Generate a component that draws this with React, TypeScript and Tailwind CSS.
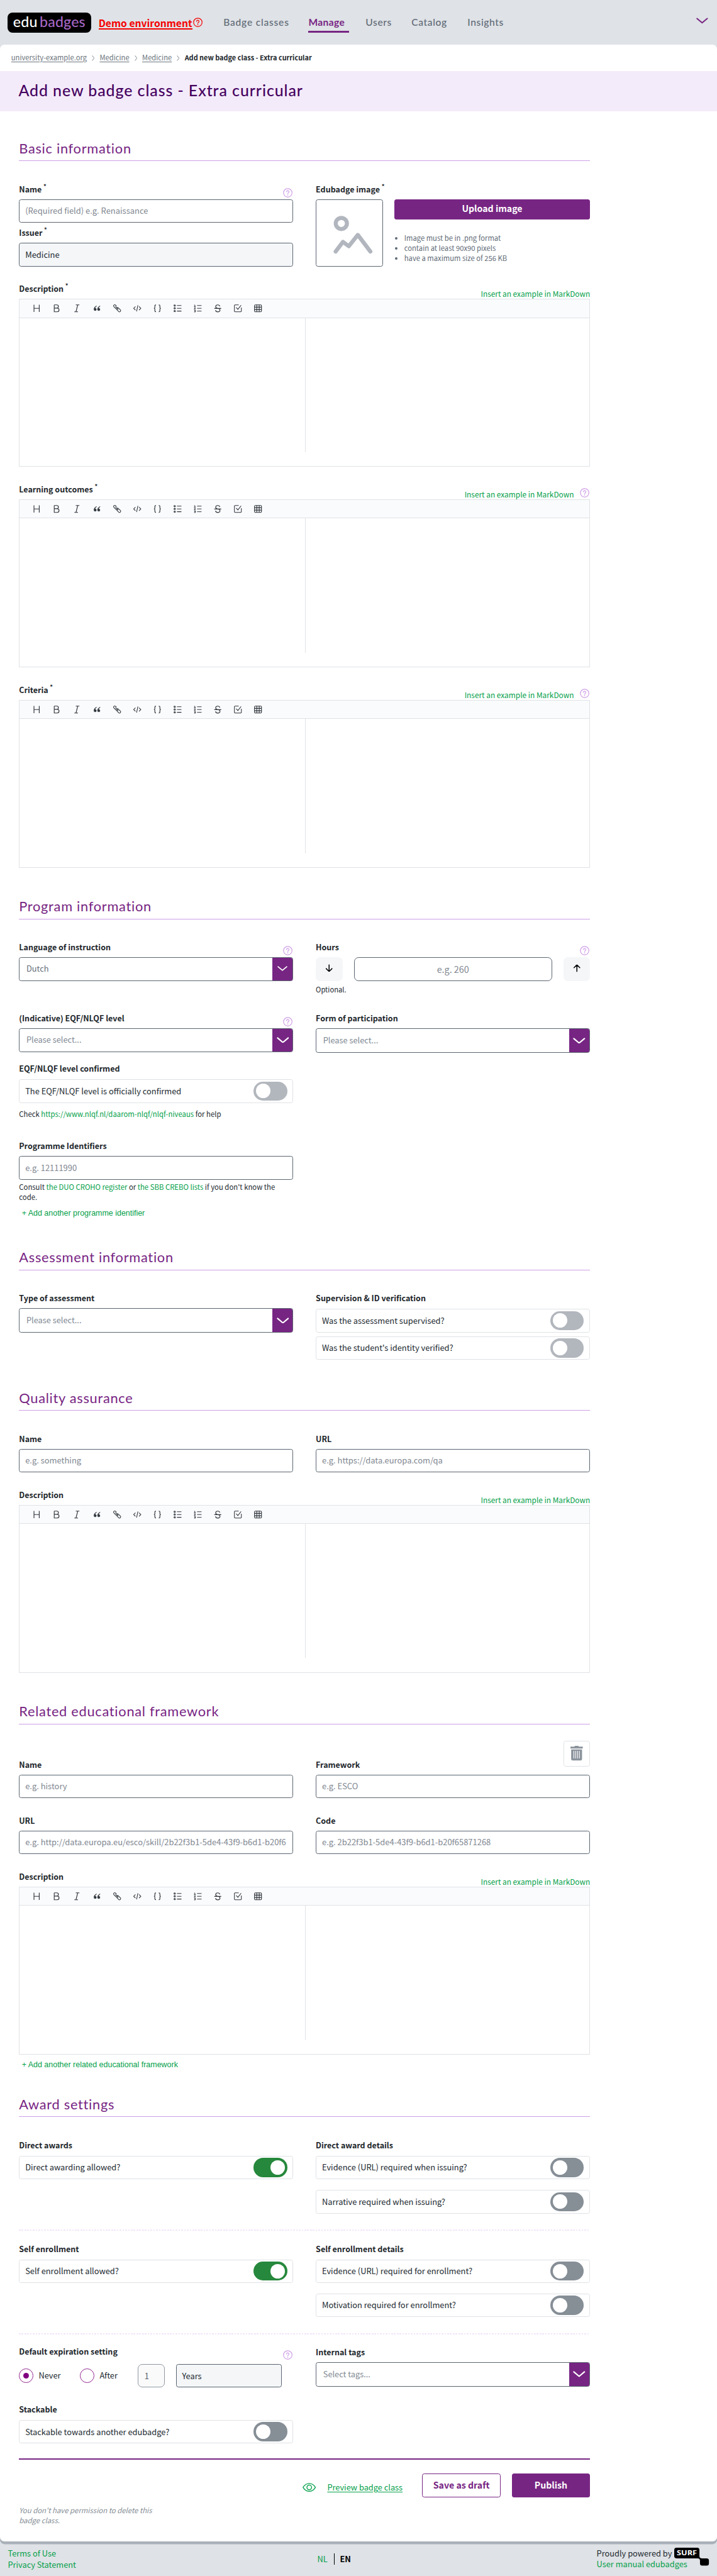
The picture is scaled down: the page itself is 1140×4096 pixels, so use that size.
import React from "react";

/* ---------- icons ---------- */

function Help({ className = "text-[#cf9fe6]" }: { className?: string }) {
  return (
    <svg viewBox="0 0 24 24" className={`size-[17px] shrink-0 ${className}`} fill="none" stroke="currentColor" strokeLinecap="round">
      <circle cx="12" cy="12" r="10.7" strokeWidth="1.9" />
      <path d="M9 9.6a3 3 0 1 1 4.4 2.6c-.9.5-1.4 1-1.4 2.1" strokeWidth="2" />
      <path d="M12 17.6v.2" strokeWidth="2.4" />
    </svg>
  );
}

function Chevron({ className }: { className: string }) {
  return (
    <svg viewBox="0 0 22 11" className={className} fill="none" stroke="currentColor" strokeWidth="2.4" strokeLinecap="round" strokeLinejoin="round">
      <path d="M1.5 1.5 11 9.5l9.5-8" />
    </svg>
  );
}

function Crumb() {
  return (
    <svg viewBox="0 0 5 10" className="mx-[9px] mt-[2px] h-[10px] w-[5px]" fill="none" stroke="#6c757d" strokeWidth="1">
      <path d="M.7.5 4.2 5 .7 9.5" />
    </svg>
  );
}

function Arrow({ up = false }: { up?: boolean }) {
  return (
    <svg viewBox="0 0 14 14" className={up ? "h-[14px] w-[14px] -translate-y-[2px] rotate-180" : "h-[14px] w-[14px] -translate-y-[2px]"} fill="none" stroke="#000" strokeWidth="1.7" strokeLinecap="round" strokeLinejoin="round">
      <path d="M7 1v12M1.8 7.8 7 13l5.2-5.2" />
    </svg>
  );
}

const toolIcons: React.ReactNode[] = [
  <path d="M2.3.5v13M11.7.5v13M2.3 7h9.4" />,
  <path d="M2.5.8v12.4h5.3a3.3 3.3 0 0 0 0-6.6H2.5M2.5.8h4.6a2.9 2.9 0 0 1 0 5.8" />,
  <path d="M5 .8h6.5M2.5 13.2H9M8.6.8 5.4 13.2" />,
  <path d="M6 2.6C3.4 3.6 1.4 6 1.4 9a2.3 2.3 0 1 0 2.1-2.3C3.8 5.2 4.8 4 6.3 3.3ZM12.4 2.6C9.8 3.6 7.8 6 7.8 9a2.3 2.3 0 1 0 2.1-2.3c.3-1.5 1.3-2.7 2.8-3.4Z" fill="currentColor" strokeWidth=".4" />,
  <path d="M8.4 8.4 5 5a2 2 0 0 1 .3-2.7L4.2 1.2a2 2 0 0 0-2.8 0l-.2.2a2 2 0 0 0 0 2.8l3.6 3.6a2 2 0 0 0 2.8 0M5.6 5.6 9 9M6.4 6.2a2 2 0 0 1 2.8 0l3.6 3.6a2 2 0 0 1 0 2.8l-.2.2a2 2 0 0 1-2.8 0L6.2 9.2" strokeWidth="1.2" />,
  <path d="M3.8 3.8.6 7l3.200 3.200M10.200 3.800 13.400 7l-3.200 3.200M8.200 1.600 5.800 12.400" strokeWidth="1.2" />,
  <path d="M4.500 1H4a1.500 1.500 0 0 0-1.500 1.500v2.700C2.500 6.200 2 7 .9 7 2 7 2.500 7.800 2.500 8.800v2.700A1.500 1.500 0 0 0 4 13h.5M9.500 1h.5a1.500 1.500 0 0 1 1.500 1.500v2.700c0 1 .5 1.800 1.600 1.800-1.100 0-1.600.8-1.600 1.800v2.700A1.500 1.500 0 0 1 10 13h-.5" />,
  <g>
    <path d="M6 2h8M6 7h8M6 12h8" />
    <circle cx="2" cy="2" r="1.2" />
    <circle cx="2" cy="7" r="1.2" />
    <circle cx="2" cy="12" r="1.2" />
  </g>,
  <path d="M6 2h8M6 7h8M6 12h8M.8 1.2h1.400v2.600M.5 3.800h3M.8 5.800h2v1.200L.8 8.200h2.600M.8 10.300h2.200v3.200H.8M1.200 11.900h1.800" strokeWidth="1.1" />,
  <path d="M.8 7.200h12.400M10.800 3.600C10.400 1.800 9 .8 7 .8 4.800.8 3.300 2 3.300 3.800c0 1.700 1.300 2.700 3.700 3.200 2.700.5 4 1.500 4 3.200 0 1.900-1.600 3.100-4 3.100-2.300 0-3.700-1.200-3.900-3.100" />,
  <path d="M8.500.8H2A1.200 1.200 0 0 0 .8 2v10A1.200 1.200 0 0 0 2 13.200h10a1.200 1.200 0 0 0 1.200-1.200V5.500M4 5.500l3 3.400L12.800 1.400" strokeWidth="1.2" />,
  <g>
    <rect x=".8" y=".8" width="12.4" height="12.4" rx="1.6" />
    <path d="M.8 4.900h12.400M.8 9.100h12.400M4.900.8v12.400M9.100.8v12.400" />
  </g>,
];

/* ---------- form pieces ---------- */

function Label({ text, required = false, help = false, tight = false, link = false }: { text: string; required?: boolean; help?: boolean; tight?: boolean; link?: boolean }) {
  return (
    <div className={tight ? "flex h-[30px] justify-between" : "flex h-[29px] justify-between"}>
      <div className="h-[20px] pt-[1px] text-[14.05px] leading-[20px] font-bold whitespace-nowrap text-[#20262b]">
        {text}
        {required && <span className="ml-[3px] inline-block -translate-y-[7px] text-[10.5px] leading-none">*</span>}
      </div>
      <div className="flex items-end gap-[11px]">
        {link && <a className="-mb-px h-[20px] text-[13.35px] leading-[20px] whitespace-nowrap text-[#04a04a]">Insert an example in MarkDown</a>}
        {help && <span className="mr-[1px] mb-[3px] flex">
          <Help />
        </span>}
      </div>
    </div>
  );
}

function Input({ value, filled = false }: { value: string; filled?: boolean }) {
  return (
    <div className={filled
      ? "flex h-[42px] items-center overflow-hidden rounded-[4px] border border-[#5a6570] bg-[#f4f6f8] px-[10px] pb-[1px] text-[14.55px] whitespace-nowrap text-[#212930]"
      : "flex h-[42px] items-center overflow-hidden rounded-[4px] border border-[#5a6570] bg-white px-[10px] pb-[1px] text-[14.55px] whitespace-nowrap text-[#7f8791]"}>
      {value}
    </div>
  );
}

function Field({ label, value, filled, required, help }: { label: string; value: string; filled?: boolean; required?: boolean; help?: boolean }) {
  return (
    <div>
      <Label text={label} required={required} help={help} />
      <Input value={value} filled={filled} />
    </div>
  );
}

function Select({ value, short = false, small = false }: { value: string; short?: boolean; small?: boolean }) {
  return (
    <div className={short
      ? "flex h-[42px] overflow-hidden rounded-[4px] border border-[#5a6570]"
      : "flex h-[44px] overflow-hidden rounded-[4px] border border-[#5a6570]"}>
      <div className={small
        ? "flex flex-1 items-center pb-[2px] pl-[12px] text-[14.4px] text-[#66707a]"
        : "flex flex-1 items-center pb-[2px] pl-[12px] text-[14.4px] text-[#808993]"}>{value}</div>
      <div className="flex w-[36px] items-center justify-center bg-[#772583] text-white">
        <Chevron className={small ? "mb-[3px] h-[9px] w-[18px]" : "mb-[1px] h-[11px] w-[22px]"} />
      </div>
    </div>
  );
}

function Toggle({ text, state = "off" }: { text: string; state?: "off" | "on" | "disabled" }) {
  const track = { off: "bg-[#868e96]", on: "justify-end bg-[#26883c]", disabled: "bg-[#b2b6bd]" }[state];
  return (
    <div className="flex h-[42px] items-center justify-between rounded-[4px] border border-[#dfe2e6] pr-[10px] pl-[10px]">
      <span className="pb-[1px] text-[14.45px] text-[#212930]">{text}</span>
      <span className={`flex h-[34px] w-[60px] items-center rounded-full px-[4px] ${track}`}>
        <span className="size-[26px] rounded-full bg-white" />
      </span>
    </div>
  );
}

function Editor({ label, required, help }: { label: string; required?: boolean; help?: boolean }) {
  return (
    <div>
      <Label text={label} required={required} help={help} link />
      <div className="flex h-[300px] flex-col border border-[#dfe2e6]">
        <div className="flex h-[33px] shrink-0 items-center gap-[22px] border-b border-[#dfe2e6] bg-[#fafbfd] pl-[23px] text-[#30363c]">
          {toolIcons.map((icon, i) => (
            <svg key={i} viewBox="0 0 14 14" className="size-[14px] overflow-visible" fill="none" stroke="currentColor" strokeWidth="1.3">
              {icon}
            </svg>
          ))}
        </div>
        <div className="mb-[25px] w-[511px] flex-1 border-r border-[#dfe2e6]" />
      </div>
    </div>
  );
}

function Heading({ children }: { children: React.ReactNode }) {
  return (
    <h2 className="h-[40px] border-b border-[#cda0e6] font-[Lato] text-[24.5px] leading-[33px] tracking-[0.8px] whitespace-nowrap text-[#772583]">{children}</h2>
  );
}

function Columns({ children, className = "" }: { children: React.ReactNode; className?: string }) {
  return <div className={`grid grid-cols-2 gap-x-[40px] ${className}`}>{children}</div>;
}

function Dotted() {
  return <div className="h-[2px] bg-[repeating-linear-gradient(90deg,#f2e5f9_0_3px,transparent_3px_5px)]" />;
}

/* ---------- sections ---------- */

function Header() {
  return (
    <header className="flex h-[80px] items-start pl-[13px]">
      <div className="mt-[22px] flex h-[36px] w-[150px] items-center justify-center gap-[4px] rounded-[9px] bg-black pb-[3px] font-[Lato] text-[26px] leading-[30px] font-medium tracking-[0.2px]">
        <span className="text-white">edu</span>
        <span className="text-[#a566c4]">badges</span>
      </div>
      <div className="mt-[31px] ml-[13px] flex w-[184px] items-start gap-[2px]">
        <span className="h-[22px] border-b-[2.4px] border-[#f50000] text-[17.6px] leading-[21px] font-bold whitespace-nowrap text-[#f50000]">Demo environment</span>
        <Help className="text-[#f50000]" />
      </div>
      <nav className="mt-[29px] ml-[39px] flex font-[Lato] text-[17.5px] leading-[22px] font-medium whitespace-nowrap text-[#5f6b77]">
        <span className="w-[152px] tracking-[0.9px]">Badge classes</span>
        <span className="mr-[30px] h-[29px] w-[72px] border-b-[3.4px] border-[#772583] font-bold tracking-[0.4px] text-[#772583]">Manage</span>
        <span className="w-[82px] tracking-[0.7px]">Users</span>
        <span className="w-[100px] tracking-[0.7px]">Catalog</span>
        <span className="tracking-[0.7px]">Insights</span>
      </nav>
      <Chevron className="mt-[32px] mr-[16px] ml-auto h-[11px] w-[21px] text-[#772583]" />
    </header>
  );
}

function Basic() {
  return (
    <section>
      <Heading>Basic information</Heading>
      <Columns className="mt-[39px]">
        <div className="flex flex-col gap-[7px]">
          <Field label="Name" value="(Required field) e.g. Renaissance" required help />
          <Field label="Issuer" value="Medicine" filled required />
        </div>
        <div>
          <Label text="Edubadge image" required />
          <div className="flex h-[120px] gap-[20px]">
            <div className="w-[120px] rounded-[4px] border border-[#5a6570]">
              <svg viewBox="565 357 118 118" className="size-full" fill="none" stroke="#b2b6be" strokeWidth="7.2" strokeLinecap="round" strokeLinejoin="round">
                <circle cx="609.7" cy="399" r="10" />
                <path d="m599.5 449.3 13-17.3 10.5 7.800L639.200 419.500l22.500 29.800" />
              </svg>
            </div>
            <div className="flex-1">
              <div className="flex h-[36px] items-center justify-center rounded-[4px] bg-[#772583] pb-[2px] text-[15.9px] font-bold text-white">Upload image</div>
              <ul className="mt-[24px] list-disc pl-[18px] text-[12.65px] leading-[18px] text-[#5f6b77]">
                <li>Image must be in .png format</li>
                <li>contain at least 90x90 pixels</li>
                <li>have a maximum size of 256 KB</li>
              </ul>
            </div>
          </div>
        </div>
      </Columns>
      <div className="mt-[29px] flex flex-col gap-[29px]">
        <Editor label="Description" required />
        <Editor label="Learning outcomes" required help />
        <Editor label="Criteria" required help />
      </div>
    </section>
  );
}

function Program() {
  return (
    <section className="mt-[52px]">
      <Heading>Program information</Heading>
      <Columns className="mt-[39px] h-[127px]">
        <div>
          <Label text="Language of instruction" help />
          <Select value="Dutch" short small />
        </div>
        <div>
          <Label text="Hours" help />
          <div className="flex h-[42px] gap-[20px]">
            <div className="flex w-[48px] items-center justify-center rounded-[8px] bg-[#f4f6f8]">
              <Arrow />
            </div>
            <div className="flex flex-1 items-center justify-center rounded-[8px] border border-[#5a6570] pb-[1px] text-[16.1px] text-[#7f8791]">e.g. 260</div>
            <div className="flex w-[48px] items-center justify-center rounded-[8px] bg-[#f4f6f8]">
              <Arrow up />
            </div>
          </div>
          <p className="mt-[6px] text-[12.6px] leading-[18px] text-[#212930]">Optional.</p>
        </div>
      </Columns>
      <Columns>
        <div>
          <Label text="(Indicative) EQF/NLQF level" help />
          <Select value="Please select..." short />
          <div className="mt-[19px]">
            <Label text="EQF/NLQF level confirmed" tight />
            <Toggle text="The EQF/NLQF level is officially confirmed" state="disabled" />
          </div>
          <p className="mt-[11px] text-[12.75px] leading-[18px] whitespace-nowrap text-[#212930]">
            Check <a className="text-[#04a04a]">https://www.nlqf.nl/daarom-nlqf/nlqf-niveaus</a> for help
          </p>
          <div className="mt-[37px]">
            <Field label="Programme Identifiers" value="e.g. 12111990" />
          </div>
          <p className="mt-[4px] text-[12.75px] leading-[18px] whitespace-nowrap text-[#212930]">
            Consult <a className="text-[#04a04a]">the DUO CROHO register</a> or <a className="text-[#04a04a]">the SBB CREBO lists</a> if you don&apos;t know the
            <br />
            code.
          </p>
          <p className="mt-[10px] h-[20px] pt-[1px] pl-[5px] font-['Liberation_Sans'] text-[14px] leading-[20px] text-[#04a04a]">+ Add another programme identifier</p>
        </div>
        <div>
          <Label text="Form of participation" />
          <Select value="Please select..." />
        </div>
      </Columns>
    </section>
  );
}

function Assessment() {
  return (
    <section className="mt-[52px]">
      <Heading>Assessment information</Heading>
      <Columns className="mt-[39px]">
        <div>
          <Label text="Type of assessment" />
          <Select value="Please select..." />
        </div>
        <div>
          <Label text="Supervision &amp; ID verification" tight />
          <div className="flex flex-col gap-[7px]">
            <Toggle text="Was the assessment supervised?" state="disabled" />
            <Toggle text="Was the student's identity verified?" state="disabled" />
          </div>
        </div>
      </Columns>
    </section>
  );
}

function Quality() {
  return (
    <section className="mt-[51px]">
      <Heading>Quality assurance</Heading>
      <Columns className="mt-[39px] mb-[29px]">
        <Field label="Name" value="e.g. something" />
        <Field label="URL" value="e.g. https://data.europa.com/qa" />
      </Columns>
      <Editor label="Description" />
    </section>
  );
}

function Framework() {
  return (
    <section className="mt-[52px]">
      <Heading>Related educational framework</Heading>
      <div className="mt-[30px] -mb-[15px] flex h-[46px] justify-end">
        <div className="flex w-[48px] items-start justify-center rounded-[4px] border border-[#dfe2e6] pt-[8px]">
          <svg viewBox="0 0 22 26" className="h-[26px] w-[22px]" fill="#8b939c">
            <path d="M7 1.500 8 0h6l1 1.500h7v3.200H0V1.500ZM1.300 6.500h19.400v17a2.500 2.500 0 0 1-2.500 2.500H3.800a2.500 2.500 0 0 1-2.500-2.500Z" />
            <path d="M6 9v13.500M9.300 9v13.500M12.700 9v13.500M16 9v13.500" stroke="#fff" strokeWidth="1.2" />
          </svg>
        </div>
      </div>
      <Columns className="mb-[29px] gap-y-[29px]">
        <Field label="Name" value="e.g. history" />
        <Field label="Framework" value="e.g. ESCO" />
        <Field label="URL" value="e.g. http://data.europa.eu/esco/skill/2b22f3b1-5de4-43f9-b6d1-b20f6" />
        <Field label="Code" value="e.g. 2b22f3b1-5de4-43f9-b6d1-b20f65871268" />
      </Columns>
      <Editor label="Description" />
      <p className="mt-[8px] h-[20px] pt-[1px] pl-[5px] font-['Liberation_Sans'] text-[14px] leading-[20px] text-[#04a04a]">+ Add another related educational framework</p>
    </section>
  );
}

function Radio({ text, checked = false }: { text: string; checked?: boolean }) {
  return (
    <div className="flex items-center gap-[10px]">
      <span className="flex size-[25px] items-center justify-center rounded-full border border-[#92278f]">
        {checked && <span className="size-[11px] rounded-full bg-[#800080]" />}
      </span>
      <span className="pb-[2px]">{text}</span>
    </div>
  );
}

function Award() {
  return (
    <section className="mt-[44px]">
      <Heading>Award settings</Heading>
      <Columns className="mt-[39px] mb-[29px]">
        <div>
          <Label text="Direct awards" tight />
          <Toggle text="Direct awarding allowed?" state="on" />
        </div>
        <div>
          <Label text="Direct award details" tight />
          <div className="flex flex-col gap-[19px]">
            <Toggle text="Evidence (URL) required when issuing?" />
            <Toggle text="Narrative required when issuing?" />
          </div>
        </div>
      </Columns>
      <Dotted />
      <Columns className="mt-[21px] mb-[29px]">
        <div>
          <Label text="Self enrollment" tight />
          <Toggle text="Self enrollment allowed?" state="on" />
        </div>
        <div>
          <Label text="Self enrollment details" tight />
          <div className="flex flex-col gap-[19px]">
            <Toggle text="Evidence (URL) required for enrollment?" />
            <Toggle text="Motivation required for enrollment?" />
          </div>
        </div>
      </Columns>
      <Dotted />
      <Columns className="mt-[19px]">
        <div>
          <Label text="Default expiration setting" help />
          <div className="mt-[5px] flex h-[42px] items-center text-[14.4px] text-[#212930]">
            <div className="w-[109px]">
              <Radio text="Never" checked />
            </div>
            <div className="w-[103px]">
              <Radio text="After" />
            </div>
            <div className="mr-[20px] flex h-[42px] w-[48px] items-center rounded-[8px] border border-[#8f98a1] bg-[#fafafa] pl-[11px] text-[#59626c]">1</div>
            <div className="flex h-[42px] w-[189px] items-center rounded-[4px] border border-[#5a6570] bg-[#f4f6f8] pb-[1px] pl-[10px]">Years</div>
          </div>
        </div>
        <div className="pt-[2px]">
          <Label text="Internal tags" />
          <Select value="Select tags..." />
        </div>
        <div className="mt-[28px]">
          <Label text="Stackable" tight />
          <Toggle text="Stackable towards another edubadge?" />
        </div>
      </Columns>
    </section>
  );
}

function Actions() {
  return (
    <section className="mt-[27px]">
      <div className="mb-[24.7px] h-[2.3px] bg-[#772583]" />
      <div className="flex h-[42px] justify-end">
        <svg viewBox="0 0 24 16" className="mt-[16px] mr-[20px] h-[16px] w-[24px]" fill="none" stroke="#04a04a" strokeWidth="1.5">
          <path d="M1 8c2.600-4.600 6.400-7 11-7s8.400 2.400 11 7c-2.600 4.600-6.400 7-11 7S3.600 12.600 1 8Z" />
          <circle cx="12" cy="8" r="4.2" />
        </svg>
        <a className="mt-[14px] mr-[35px] text-[14.4px] leading-[20px] text-[#04a04a] underline underline-offset-2">Preview badge class</a>
        <div className="mr-[20px] flex w-[140px] items-center justify-center rounded-[4px] border border-[#772583] pb-[2px] text-[15.9px] font-bold text-[#772583]">Save as draft</div>
        <div className="flex w-[140px] items-center justify-center rounded-[4px] bg-[#772583] pb-[2px] text-[15.9px] font-bold text-white">Publish</div>
      </div>
      <p className="mt-[14px] text-[12.8px] leading-[18px] text-[#868e96] italic">
        You don&apos;t have permission to delete this
        <br />
        badge class.
      </p>
    </section>
  );
}

function Footer() {
  return (
    <footer className="mt-[5px] grid h-[57px] grid-cols-3 px-[14px] text-[14.4px] leading-[20px] text-[#04a04a]">
      <div className="pt-[7px]">
        <p>Terms of Use</p>
        <p>Privacy Statement</p>
      </div>
      <div className="flex justify-center pt-[17px] pr-[87px]">
        <span className="h-[20px] border-r border-black pr-[11px]">NL</span>
        <span className="pl-[10px] font-bold text-black">EN</span>
      </div>
      <div className="flex justify-end pt-[6px]">
        <div className="relative w-[201px] whitespace-nowrap">
          <p className="text-[#212930]">Proudly powered by</p>
          <p>User manual edubadges</p>
          <svg viewBox="0 0 62 32" className="absolute top-[1px] left-[139px] h-[32px] w-[62px]">
            <path d="M4 0h37q4 0 4 4v15H4q-4 0-4-4V4q0-4 4-4Z" fill="#000" />
            <path d="M42 15l3 0q0 4 4 4h9q4 0 4 4v5q0 4-4 4h-8q-4 0-4-4v-5q0-4-4-4Z" fill="#000" />
            <text x="4.500" y="14" fill="#fff" fontFamily="Open Sans" fontWeight="700" fontSize="12" textLength="36" lengthAdjust="spacingAndGlyphs">SURF</text>
          </svg>
        </div>
      </div>
    </footer>
  );
}

export default function App() {
  return (
    <div className="h-[4096px] w-[1140px] overflow-hidden bg-[#dfe2e6]">
      <div className="w-full bg-[#dfe2e6] font-['Noto_Sans_CJK_SC',sans-serif] [zoom:0.89024]">
        <Header />
        <main className="h-[4459px] rounded-[8px] bg-white shadow-[0_5px_0_#a9b1ba]">
          <div className="flex h-[47px] items-center pb-[2px] pl-[20px] text-[12.6px] whitespace-nowrap text-[#6c757d]">
            <a className="underline underline-offset-2">university-example.org</a>
            <Crumb />
            <a className="underline underline-offset-2">Medicine</a>
            <Crumb />
            <a className="underline underline-offset-2">Medicine</a>
            <Crumb />
            <span className="text-[12.25px] font-bold text-[#20262b]">Add new badge class - Extra curricular</span>
          </div>
          <div className="flex h-[72px] items-center bg-[#f4ebfa] pb-[4px] pl-[33px]">
            <h1 className="font-[Lato] text-[28px] font-medium tracking-[1.05px] whitespace-nowrap text-[#450060]">Add new badge class - Extra curricular</h1>
          </div>
          <div className="ml-[34px] w-[1020px] pt-[49px]">
            <Basic />
            <Program />
            <Assessment />
            <Quality />
            <Framework />
            <Award />
            <Actions />
          </div>
        </main>
        <Footer />
      </div>
    </div>
  );
}
